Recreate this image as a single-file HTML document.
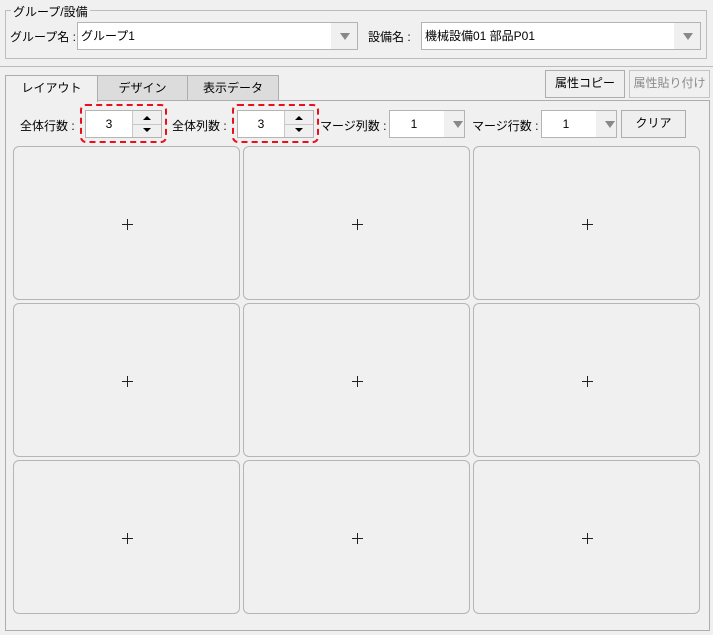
<!DOCTYPE html>
<html><head><meta charset="utf-8"><style>
*{box-sizing:border-box;margin:0;padding:0}
body{width:713px;height:635px;background:#f0f0f0;font-family:"Liberation Sans","Noto Sans CJK JP",sans-serif;font-size:12px;color:#000;position:relative;overflow:hidden}
.a{position:absolute}
.gb{left:5px;top:10px;width:702px;height:49px;border:1px solid #bdbdbd}
.combo{background:#fff;border:1px solid #b4b4b4}
.combo .dd{position:absolute;right:0;top:0;bottom:0;width:26px;background:#f0f0f0}
.combo .dd:after{content:"";position:absolute;left:9px;top:10px;border-left:5px solid transparent;border-right:5px solid transparent;border-top:7px solid #888}
.tab{top:75px;height:26px;border:1px solid #adadad;background:#dcdcdc;text-align:center;line-height:24px}
.btn{border:1px solid #adadad;background:#efefef;text-align:center;line-height:25px}
.cell{border:1px solid #b5b5b5;border-radius:6px;background:#f0f0f0;width:227px;height:154px}
.cell:before{content:"";position:absolute;left:108px;top:77px;width:11px;height:1px;background:#222}
.cell:after{content:"";position:absolute;left:113px;top:72px;width:1px;height:11px;background:#222}
.spin{background:#fff;border:1px solid #b4b4b4;width:77px;height:28px;text-align:center;line-height:26px;padding-right:29px}
.spin .b{position:absolute;right:0;top:0;width:29px;height:26px;border-left:1px solid #c8c8c8;background:#f0f0f0}
.spin .b:before{content:"";position:absolute;left:10px;top:5px;border-left:4px solid transparent;border-right:4px solid transparent;border-bottom:4px solid #000}
.spin .b:after{content:"";position:absolute;left:10px;top:17px;border-left:4px solid transparent;border-right:4px solid transparent;border-top:4px solid #000}
.spin .m{position:absolute;right:0;top:13px;width:29px;height:1px;background:#c8c8c8}
.red{border:2px dashed #e8101a;border-radius:6px}
</style></head><body>
<div class="a gb"></div>
<div class="a" style="left:11px;top:3px;background:#f0f0f0;padding:0 2px">グループ/設備</div>
<div class="a" style="left:10px;top:28px">グループ名 :</div>
<div class="a combo" style="left:77px;top:22px;width:281px;height:28px;line-height:26px;padding-left:3px">グループ1<div class="dd"></div></div>
<div class="a" style="left:368px;top:28px">設備名 :</div>
<div class="a combo" style="left:421px;top:22px;width:280px;height:28px;line-height:26px;padding-left:3px">機械設備01 部品P01<div class="dd"></div></div>
<div class="a" style="left:0;top:66px;width:713px;height:1px;background:#bdbdbd"></div>
<div class="a" style="left:5px;top:100px;width:705px;height:531px;border:1px solid #adadad"></div>
<div class="a tab" style="left:97px;width:91px">デザイン</div>
<div class="a tab" style="left:187px;width:92px">表示データ</div>
<div class="a tab" style="left:5px;width:93px;height:27px;background:#f0f0f0;border-bottom:none">レイアウト</div>
<div class="a btn" style="left:545px;top:70px;width:80px;height:28px">属性コピー</div>
<div class="a btn" style="left:629px;top:70px;width:81px;height:28px;color:#8a8a8a;background:#f0f0f0;border-color:#c4c4c4">属性貼り付け</div>
<div class="a" style="left:20px;top:117px">全体行数 :</div>
<div class="a red" style="left:80px;top:104px;width:87px;height:39px"></div>
<div class="a spin" style="left:85px;top:110px">3<div class="b"></div><div class="m"></div></div>
<div class="a" style="left:172px;top:117px">全体列数 :</div>
<div class="a red" style="left:232px;top:104px;width:87px;height:39px"></div>
<div class="a spin" style="left:237px;top:110px">3<div class="b"></div><div class="m"></div></div>
<div class="a" style="left:320px;top:117px">マージ列数 :</div>
<div class="a combo" style="left:389px;top:110px;width:76px;height:28px;line-height:26px;text-align:center;padding-right:26px">1<div class="dd" style="width:20px"></div></div>
<div class="a" style="left:472px;top:117px">マージ行数 :</div>
<div class="a combo" style="left:541px;top:110px;width:76px;height:28px;line-height:26px;text-align:center;padding-right:26px">1<div class="dd" style="width:20px"></div></div>
<div class="a btn" style="left:621px;top:110px;width:65px;height:28px">クリア</div>
<div class="a cell" style="left:13px;top:146px"></div>
<div class="a cell" style="left:243px;top:146px"></div>
<div class="a cell" style="left:473px;top:146px"></div>
<div class="a cell" style="left:13px;top:303px"></div>
<div class="a cell" style="left:243px;top:303px"></div>
<div class="a cell" style="left:473px;top:303px"></div>
<div class="a cell" style="left:13px;top:460px"></div>
<div class="a cell" style="left:243px;top:460px"></div>
<div class="a cell" style="left:473px;top:460px"></div>
</body></html>
